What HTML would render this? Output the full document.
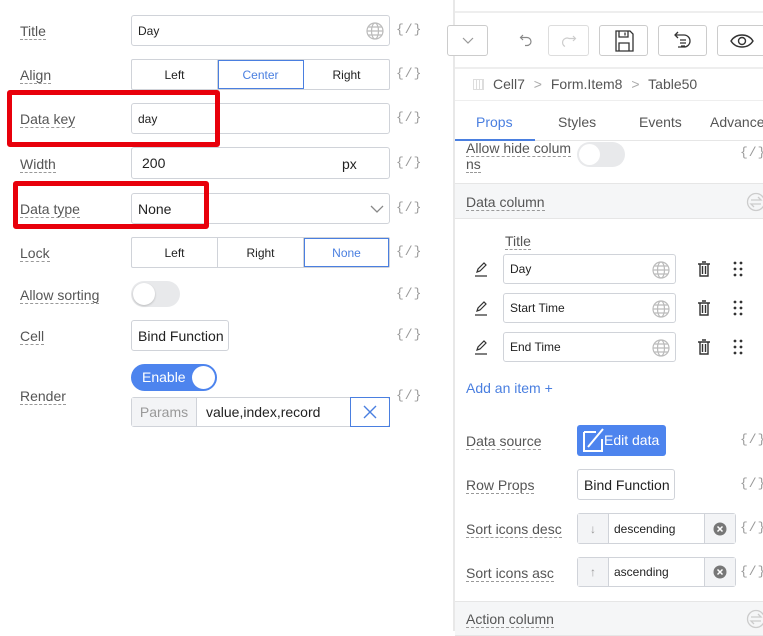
<!DOCTYPE html>
<html><head><style>
*{box-sizing:border-box;margin:0;padding:0}
body{width:763px;height:631px;overflow:hidden;background:#fff;font-family:"Liberation Sans","DejaVu Sans",sans-serif;color:#333;position:relative}
.a{position:absolute}
.lb{position:absolute;font-size:14px;color:#555;border-bottom:1px dashed #999;line-height:15px}
.in{position:absolute;border:1px solid #d0d3d9;border-radius:3px;background:#fff;font-size:12px;color:#222;display:flex;align-items:center;padding-left:6px}
.code{position:absolute;font-size:13px;color:#999;letter-spacing:1px;font-family:"Liberation Mono",monospace}
.seg{position:absolute;display:flex;border:1px solid #d0d3d9;border-radius:2px;font-size:12px}
.seg div{flex:1;display:flex;align-items:center;justify-content:center;border-right:1px solid #d0d3d9;color:#222}
.seg div:last-child{border-right:none}
.seg .on{color:#4a7fe0;outline:1px solid #4a7fe0;outline-offset:-1px}
.red{position:absolute;border:5px solid #e8000b;border-radius:3px}
.btn{position:absolute;border:1px solid #ccc;border-radius:3px;background:#fff;display:flex;align-items:center;justify-content:center}
.sec{position:absolute;left:455px;width:308px;background:#f5f6f7;border-top:1px solid #e6e6e6;border-bottom:1px solid #e6e6e6}
</style></head><body>
<!-- left panel -->
<div class="lb" style="left:20px;top:24px">Title</div>
<div class="in" style="left:131px;top:15px;width:259px;height:31px">Day
<svg class="a" style="right:5px;top:6px" width="18" height="18" viewBox="0 0 18 18" fill="none" stroke="#bbb" stroke-width="1.2"><circle cx="9" cy="9" r="8"/><ellipse cx="9" cy="9" rx="3.5" ry="8"/><path d="M1 9h16M2.5 5h13M2.5 13h13"/></svg></div>
<div class="code" style="left:396px;top:22px">{/}</div>

<div class="lb" style="left:20px;top:68px">Align</div>
<div class="seg" style="left:131px;top:59px;width:259px;height:31px"><div>Left</div><div class="on">Center</div><div>Right</div></div>
<div class="code" style="left:396px;top:66px">{/}</div>

<div class="lb" style="left:20px;top:112px">Data key</div>
<div class="in" style="left:131px;top:103px;width:259px;height:31px">day</div>
<div class="code" style="left:396px;top:110px">{/}</div>
<div class="red" style="left:7px;top:90px;width:213px;height:57px"></div>

<div class="lb" style="left:20px;top:157px">Width</div>
<div class="in" style="left:131px;top:147px;width:259px;height:32px;font-size:14px;padding-left:10px">200<span class="a" style="left:210px;top:8px">px</span></div>
<div class="code" style="left:396px;top:155px">{/}</div>

<div class="lb" style="left:20px;top:202px">Data type</div>
<div class="in" style="left:131px;top:193px;width:259px;height:31px;font-size:14px">None
<svg class="a" style="right:4px;top:9px" width="16" height="12" viewBox="0 0 16 12" fill="none" stroke="#888" stroke-width="1.3"><path d="M2 3l6 6 6-6"/></svg></div>
<div class="code" style="left:396px;top:200px">{/}</div>
<div class="red" style="left:13px;top:181px;width:196px;height:48px"></div>

<div class="lb" style="left:20px;top:246px">Lock</div>
<div class="seg" style="left:131px;top:237px;width:259px;height:31px"><div>Left</div><div>Right</div><div class="on">None</div></div>
<div class="code" style="left:396px;top:244px">{/}</div>

<div class="lb" style="left:20px;top:288px">Allow sorting</div>
<div class="a" style="left:131px;top:281px;width:49px;height:26px;border-radius:13px;background:#e8e9eb"><div class="a" style="left:2px;top:2px;width:22px;height:22px;border-radius:50%;background:#fff;box-shadow:0 1px 2px rgba(0,0,0,.2)"></div></div>
<div class="code" style="left:396px;top:286px">{/}</div>

<div class="lb" style="left:20px;top:329px">Cell</div>
<div class="in" style="left:131px;top:320px;width:98px;height:31px;font-size:14px">Bind Function</div>
<div class="code" style="left:396px;top:327px">{/}</div>

<div class="lb" style="left:20px;top:389px">Render</div>
<div class="a" style="left:131px;top:364px;width:86px;height:27px;border-radius:14px;background:#4d84ee;color:#fff;font-size:14px;padding:5px 0 0 11px">Enable<div class="a" style="right:2px;top:2px;width:23px;height:23px;border-radius:50%;background:#fff"></div></div>
<div class="a" style="left:131px;top:397px;width:259px;height:30px;border:1px solid #d0d3d9;border-radius:3px;display:flex;font-size:14px">
<div style="width:65px;background:#f3f4f6;color:#999;display:flex;align-items:center;justify-content:center;border-right:1px solid #d0d3d9">Params</div>
<div style="flex:1;display:flex;align-items:center;padding-left:9px;color:#222">value,index,record</div>
<div style="width:40px;border:1px solid #4a7fe0;margin:-1px;display:flex;align-items:center;justify-content:center"><svg width="16" height="16" viewBox="0 0 16 16" stroke="#4a7fe0" stroke-width="1.4"><path d="M2 2l12 12M14 2L2 14"/></svg></div></div>
<div class="code" style="left:396px;top:388px">{/}</div>

<!-- divider -->
<div class="a" style="left:453px;top:0;width:2px;height:631px;background:#e8e8e8"></div>

<!-- right panel -->
<div class="a" style="left:455px;top:11px;width:308px;height:2px;background:#eee"></div>
<div class="btn" style="left:447px;top:25px;width:41px;height:31px"><svg width="14" height="10" viewBox="0 0 14 10" fill="none" stroke="#999" stroke-width="1.2"><path d="M2 2l5 5 5-5"/></svg></div>
<svg class="a" style="left:519px;top:32px" width="16" height="16" viewBox="0 0 16 16" fill="none" stroke="#888" stroke-width="1.2"><path d="M4 3L1.5 5.5 4 8"/><path d="M2 5.5h6a4 4 0 010 8H6"/></svg>
<div class="btn" style="left:548px;top:25px;width:41px;height:31px;border-color:#ddd"><svg width="16" height="16" viewBox="0 0 16 16" fill="none" stroke="#ccc" stroke-width="1.2"><path d="M12 3l2.5 2.5L12 8"/><path d="M14 5.5H8a4 4 0 00-4 8"/></svg></div>
<div class="btn" style="left:599px;top:25px;width:49px;height:31px"><svg width="20" height="22" viewBox="0 0 20 22" fill="none" stroke="#333" stroke-width="1.3"><path d="M2 1h14l3 3v17H2z"/><path d="M5 1v6h9V1M11 2.5v3M5 21v-8h10v8"/></svg></div>
<div class="btn" style="left:658px;top:25px;width:49px;height:31px"><svg width="22" height="20" viewBox="0 0 22 20" fill="none" stroke="#333" stroke-width="1.3"><path d="M6 1L3 4l3 3"/><path d="M3 4h9a6 6 0 010 12H6"/><path d="M8 9h6M8 12h6M9 15h4"/></svg></div>
<div class="btn" style="left:717px;top:25px;width:50px;height:31px"><svg width="24" height="16" viewBox="0 0 24 16" fill="none" stroke="#333" stroke-width="1.4"><path d="M1 8c5-8 17-8 22 0-5 8-17 8-22 0z"/><circle cx="12" cy="8" r="3.5"/></svg></div>
<div class="a" style="left:455px;top:67px;width:308px;height:2px;background:#eee"></div>
<div class="a" style="left:473px;top:79px;width:11px;height:11px;border:1px solid #ddd;background:repeating-linear-gradient(90deg,#fff 0 2px,#ddd 2px 3px)"></div>
<div class="a" style="left:493px;top:76px;font-size:14px;color:#555">Cell7 <span style="color:#aaa;margin:0 5px">&gt;</span> Form.Item8 <span style="color:#aaa;margin:0 5px">&gt;</span> Table50</div>
<div class="a" style="left:455px;top:100px;width:308px;height:1px;background:#eee"></div>
<div class="a" style="left:476px;top:114px;font-size:14px;color:#4a7fe0">Props</div>
<div class="a" style="left:558px;top:114px;font-size:14px;color:#555">Styles</div>
<div class="a" style="left:639px;top:114px;font-size:14px;color:#555">Events</div>
<div class="a" style="left:710px;top:114px;font-size:14px;color:#555;white-space:nowrap">Advanced</div>
<div class="a" style="left:455px;top:140px;width:308px;height:1px;background:#e6e6e6"></div>
<div class="a" style="left:455px;top:139px;width:80px;height:2px;background:#4a7fe0"></div>
<div class="a" style="left:466px;top:140px;font-size:14px;color:#555;line-height:16px;width:120px"><span style="border-bottom:1px dashed #999">Allow hide colum</span><br><span style="border-bottom:1px dashed #999">ns</span></div>
<div class="a" style="left:577px;top:142px;width:48px;height:25px;border-radius:13px;background:#e8e9eb"><div class="a" style="left:2px;top:2px;width:21px;height:21px;border-radius:50%;background:#fff"></div></div>
<div class="code" style="left:740px;top:145px">{/}</div>

<div class="sec" style="top:183px;height:36px"></div>
<div class="lb" style="left:466px;top:195px">Data column</div>
<svg class="a" style="left:746px;top:192px" width="20" height="20" viewBox="0 0 20 20" fill="none" stroke="#ccc" stroke-width="1.3"><circle cx="10" cy="10" r="8.5"/><path d="M5 8h10l-3-3M15 12H5l3 3"/></svg>

<div class="lb" style="left:505px;top:234px">Title</div>
<div class="in" style="left:503px;top:254px;width:173px;height:30px">Day<svg class="a" style="right:5px;top:6px" width="18" height="18" viewBox="0 0 18 18" fill="none" stroke="#bbb" stroke-width="1.2"><circle cx="9" cy="9" r="8"/><ellipse cx="9" cy="9" rx="3.5" ry="8"/><path d="M1 9h16M2.5 5h13M2.5 13h13"/></svg></div>
<div class="in" style="left:503px;top:293px;width:173px;height:30px">Start Time<svg class="a" style="right:5px;top:6px" width="18" height="18" viewBox="0 0 18 18" fill="none" stroke="#bbb" stroke-width="1.2"><circle cx="9" cy="9" r="8"/><ellipse cx="9" cy="9" rx="3.5" ry="8"/><path d="M1 9h16M2.5 5h13M2.5 13h13"/></svg></div>
<div class="in" style="left:503px;top:332px;width:173px;height:30px">End Time<svg class="a" style="right:5px;top:6px" width="18" height="18" viewBox="0 0 18 18" fill="none" stroke="#bbb" stroke-width="1.2"><circle cx="9" cy="9" r="8"/><ellipse cx="9" cy="9" rx="3.5" ry="8"/><path d="M1 9h16M2.5 5h13M2.5 13h13"/></svg></div>
<!-- icons per row -->
<svg class="a" style="left:474px;top:261px" width="14" height="16" viewBox="0 0 14 16" fill="none" stroke="#333" stroke-width="1.2"><path d="M3 11l1-3 6-6 2 2-6 6zM1 15h12"/></svg>
<svg class="a" style="left:474px;top:300px" width="14" height="16" viewBox="0 0 14 16" fill="none" stroke="#333" stroke-width="1.2"><path d="M3 11l1-3 6-6 2 2-6 6zM1 15h12"/></svg>
<svg class="a" style="left:474px;top:339px" width="14" height="16" viewBox="0 0 14 16" fill="none" stroke="#333" stroke-width="1.2"><path d="M3 11l1-3 6-6 2 2-6 6zM1 15h12"/></svg>
<svg class="a" style="left:697px;top:261px" width="14" height="16" viewBox="0 0 14 16" fill="none" stroke="#333" stroke-width="1.4"><path d="M1 3h12M5 1h4M3 3v12h8V3M5.5 5v8M8.5 5v8"/></svg>
<svg class="a" style="left:697px;top:300px" width="14" height="16" viewBox="0 0 14 16" fill="none" stroke="#333" stroke-width="1.4"><path d="M1 3h12M5 1h4M3 3v12h8V3M5.5 5v8M8.5 5v8"/></svg>
<svg class="a" style="left:697px;top:339px" width="14" height="16" viewBox="0 0 14 16" fill="none" stroke="#333" stroke-width="1.4"><path d="M1 3h12M5 1h4M3 3v12h8V3M5.5 5v8M8.5 5v8"/></svg>
<svg class="a" style="left:733px;top:261px" width="10" height="16" viewBox="0 0 10 16" fill="#333"><circle cx="2" cy="2" r="1.4"/><circle cx="8" cy="2" r="1.4"/><circle cx="2" cy="8" r="1.4"/><circle cx="8" cy="8" r="1.4"/><circle cx="2" cy="14" r="1.4"/><circle cx="8" cy="14" r="1.4"/></svg>
<svg class="a" style="left:733px;top:300px" width="10" height="16" viewBox="0 0 10 16" fill="#333"><circle cx="2" cy="2" r="1.4"/><circle cx="8" cy="2" r="1.4"/><circle cx="2" cy="8" r="1.4"/><circle cx="8" cy="8" r="1.4"/><circle cx="2" cy="14" r="1.4"/><circle cx="8" cy="14" r="1.4"/></svg>
<svg class="a" style="left:733px;top:339px" width="10" height="16" viewBox="0 0 10 16" fill="#333"><circle cx="2" cy="2" r="1.4"/><circle cx="8" cy="2" r="1.4"/><circle cx="2" cy="8" r="1.4"/><circle cx="8" cy="8" r="1.4"/><circle cx="2" cy="14" r="1.4"/><circle cx="8" cy="14" r="1.4"/></svg>

<div class="a" style="left:466px;top:380px;font-size:14px;color:#4a7fe0">Add an item +</div>

<div class="lb" style="left:466px;top:434px">Data source</div>
<div class="a" style="left:577px;top:425px;width:89px;height:31px;background:#4d84ee;border-radius:3px;color:#fff;font-size:14px;padding:7px 0 0 27px">Edit data
<svg class="a" style="left:5px;top:2px" width="24" height="26" viewBox="0 0 24 26" fill="none" stroke="#fff" stroke-width="2"><path d="M2 5h12M2 5v19h18V12"/><path d="M6 20L21 2"/></svg></div>
<div class="code" style="left:740px;top:432px">{/}</div>

<div class="lb" style="left:466px;top:478px">Row Props</div>
<div class="in" style="left:577px;top:469px;width:98px;height:31px;font-size:14px">Bind Function</div>
<div class="code" style="left:740px;top:476px">{/}</div>

<div class="lb" style="left:466px;top:522px">Sort icons desc</div>
<div class="a" style="left:577px;top:513px;width:159px;height:31px;border:1px solid #d0d3d9;border-radius:3px;display:flex;font-size:12px">
<div style="width:31px;background:#f3f4f6;border-right:1px solid #d0d3d9;color:#999;display:flex;align-items:center;justify-content:center">&#8595;</div>
<div style="flex:1;display:flex;align-items:center;padding-left:5px;color:#222">descending</div>
<div style="width:31px;background:#f3f4f6;border-left:1px solid #d0d3d9;display:flex;align-items:center;justify-content:center"><svg width="14" height="14" viewBox="0 0 14 14"><circle cx="7" cy="7" r="6.5" fill="#777"/><path d="M4.5 4.5l5 5M9.5 4.5l-5 5" stroke="#fff" stroke-width="1.5"/></svg></div></div>
<div class="code" style="left:740px;top:520px">{/}</div>

<div class="lb" style="left:466px;top:566px">Sort icons asc</div>
<div class="a" style="left:577px;top:557px;width:159px;height:30px;border:1px solid #d0d3d9;border-radius:3px;display:flex;font-size:12px">
<div style="width:31px;background:#f3f4f6;border-right:1px solid #d0d3d9;color:#999;display:flex;align-items:center;justify-content:center">&#8593;</div>
<div style="flex:1;display:flex;align-items:center;padding-left:5px;color:#222">ascending</div>
<div style="width:31px;background:#f3f4f6;border-left:1px solid #d0d3d9;display:flex;align-items:center;justify-content:center"><svg width="14" height="14" viewBox="0 0 14 14"><circle cx="7" cy="7" r="6.5" fill="#777"/><path d="M4.5 4.5l5 5M9.5 4.5l-5 5" stroke="#fff" stroke-width="1.5"/></svg></div></div>
<div class="code" style="left:740px;top:564px">{/}</div>

<div class="sec" style="top:601px;height:35px"></div>
<div class="lb" style="left:466px;top:612px">Action column</div>
<svg class="a" style="left:746px;top:609px" width="20" height="20" viewBox="0 0 20 20" fill="none" stroke="#ccc" stroke-width="1.3"><circle cx="10" cy="10" r="8.5"/><path d="M5 8h10l-3-3M15 12H5l3 3"/></svg>
</body></html>
